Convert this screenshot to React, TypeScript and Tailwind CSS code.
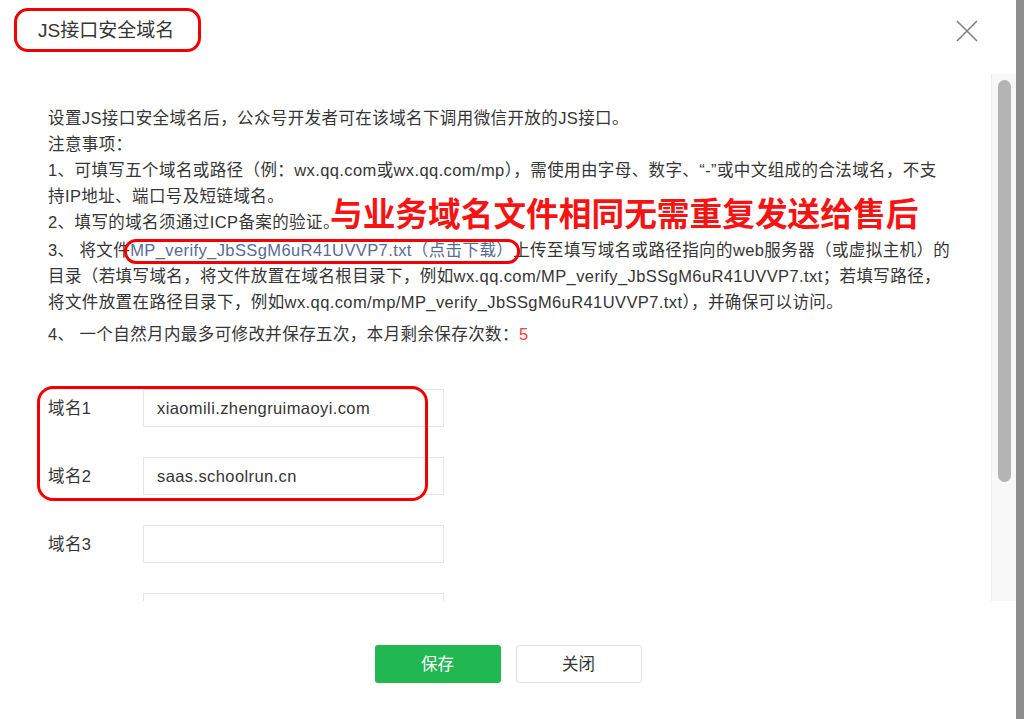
import React from "react";

const font = {
  fontFamily: '"Liberation Sans", "Noto Sans CJK SC", sans-serif',
};

const fileName = "MP_verify_JbSSgM6uR41UVVP7.txt";

function DomainRow({ label, value }: { label: string; value?: string }) {
  return (
    <div className="flex items-center h-[38px]">
      <div className="w-[95px] text-[16.5px] tracking-[0.4px] text-[#353535]">{label}</div>
      <div className="w-[301px] h-[38px] border border-[#e6e6e6] flex items-center pl-[13px] text-[16.5px] tracking-[0.4px] text-[#353535]">
        {value}
      </div>
    </div>
  );
}

export default function App() {
  return (
    <div
      className="w-[1024px] h-[719px] flex bg-white overflow-hidden"
      style={font}
    >
      <div className="flex-1 flex flex-col">
        {/* header */}
        <div className="h-[74px] flex items-start justify-between pl-[38px] pr-[38px] pt-[18px]">
          <span className="relative text-[19px] leading-[26px] text-[#353535]">
            JS接口安全域名
            <span className="absolute -left-[24px] -right-[27px] -top-[10px] -bottom-[8px] border-[3px] border-[#f20000] rounded-[14px]" />
          </span>
          <div className="h-[26px] flex items-center">
            <svg width="22" height="22" viewBox="0 0 22 22">
              <path
                d="M1 1 L21 21 M21 1 L1 21"
                stroke="#808080"
                strokeWidth="1.6"
                fill="none"
              />
            </svg>
          </div>
        </div>

        {/* scroll area */}
        <div className="h-[527px] flex">
          <div className="relative flex-1 overflow-hidden pl-[48px] pt-[31px]">
            <div className="text-[16.5px] tracking-[0.4px] leading-[26px] text-[#353535] whitespace-nowrap">
              <div>设置JS接口安全域名后，公众号开发者可在该域名下调用微信开放的JS接口。</div>
              <div>注意事项：</div>
              <div>
                1、可填写五个域名或路径（例：wx.qq.com或wx.qq.com/mp），需使用由字母、数字、“-”或中文组成的合法域名，不支
              </div>
              <div>持IP地址、端口号及短链域名。</div>
              <div>2、填写的域名须通过ICP备案的验证。</div>
              <div className="pt-[2px]">
                3、 将文件
                <span className="relative">
                  <a href="#" className="text-[#576b95]">
                    {fileName}（点击下载）
                  </a>
                  <span className="absolute -left-[6px] -right-[7px] -top-[2px] -bottom-[5px] border-[3px] border-[#f20000] rounded-[12px]" />
                </span>
                上传至填写域名或路径指向的web服务器（或虚拟主机）的
              </div>
              <div>
                目录（若填写域名，将文件放置在域名根目录下，例如wx.qq.com/{fileName}；若填写路径，
              </div>
              <div>
                将文件放置在路径目录下，例如wx.qq.com/mp/{fileName}），并确保可以访问。
              </div>
              <div className="mt-[6px]">
                4、 一个自然月内最多可修改并保存五次，本月剩余保存次数：
                <span className="text-[#fa3c3c]">5</span>
              </div>
            </div>

            <div className="absolute left-[330px] top-[124px] text-[32.7px] leading-[34px] font-bold text-[#f51414] whitespace-nowrap">
              与业务域名文件相同无需重复发送给售后
            </div>

            {/* form */}
            <div className="relative mt-[42px] flex flex-col gap-[30px]">
              <span className="absolute -left-[11px] -top-[3px] w-[391px] h-[115px] border-[3px] border-[#f20000] rounded-[16px]" />
              <DomainRow label="域名1" value="xiaomili.zhengruimaoyi.com" />
              <DomainRow label="域名2" value="saas.schoolrun.cn" />
              <DomainRow label="域名3" />
              <DomainRow label="" />
            </div>
          </div>

          {/* scrollbar */}
          <div className="w-[25px] border-l border-[#ececec] bg-[#f8f8f8] pt-[6px] pl-[6px]">
            <div className="w-[13px] h-[402px] rounded-full bg-[#b4b4b4]" />
          </div>
        </div>

        {/* footer */}
        <div className="flex-1 flex justify-center items-start gap-[15px] pt-[44px]">
          <button className="w-[126px] h-[38px] rounded-[3px] bg-[#21b751] text-white text-[16.5px]">
            保存
          </button>
          <button className="w-[126px] h-[38px] rounded-[3px] bg-white border border-[#e2e2e2] text-[#353535] text-[16.5px]">
            关闭
          </button>
        </div>
      </div>
      <div className="w-[8px] bg-[#8e8e8e]" />
    </div>
  );
}
